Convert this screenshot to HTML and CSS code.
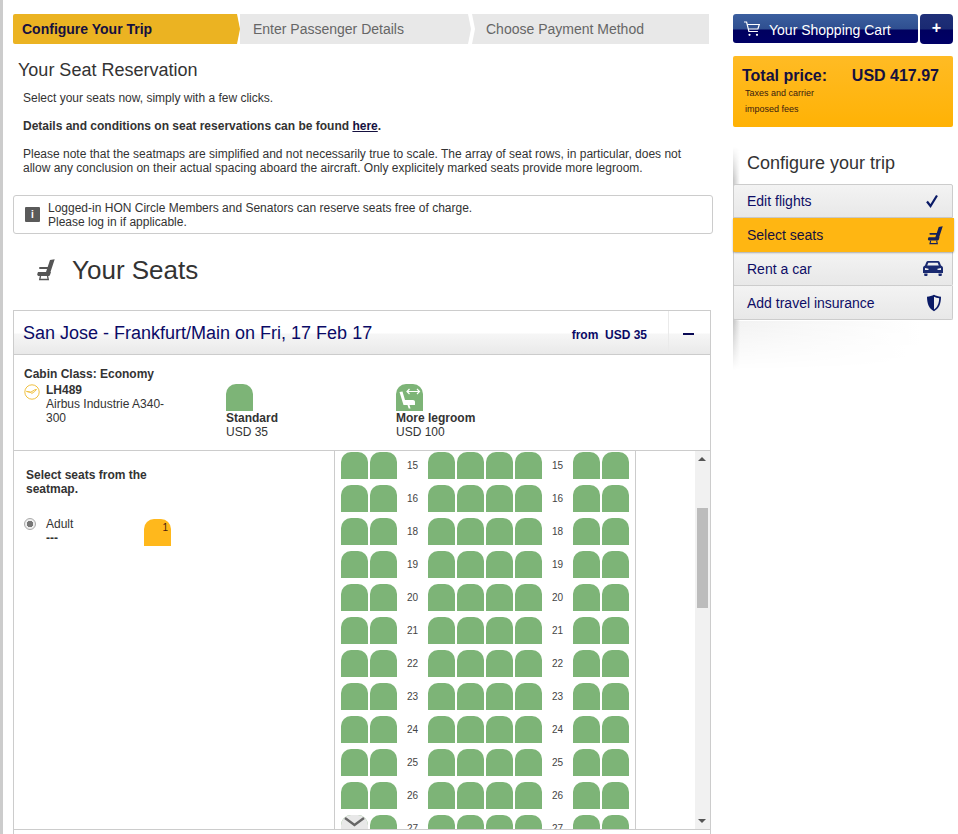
FILE: index.html
```html
<!DOCTYPE html>
<html lang="en">
<head>
<meta charset="utf-8">
<title>Your Seat Reservation</title>
<link rel="stylesheet" href="styles.css">
</head>
<body>
<div class="page">
  <main class="main">
    <ol class="steps">
      <li class="step step-active">Configure Your Trip</li>
      <li class="step step-mid">Enter Passenger Details</li>
      <li class="step step-last">Choose Payment Method</li>
    </ol>
    <h1 class="title">Your Seat Reservation</h1>
    <div class="intro">
      <p>Select your seats now, simply with a few clicks.</p>
      <p><strong>Details and conditions on seat reservations can be found <a href="#">here</a>.</strong></p>
      <p>Please note that the seatmaps are simplified and not necessarily true to scale. The array of seat rows, in particular, does not allow any conclusion on their actual spacing aboard the aircraft. Only explicitely marked seats provide more legroom.</p>
    </div>
    <div class="notice">
      <span class="notice-icon">i</span>
      <p>Logged-in HON Circle Members and Senators can reserve seats free of charge.<br>Please log in if applicable.</p>
    </div>
    <div class="seats-head">
      <svg class="seat-svg seats-icon" viewBox="0 0 20 22"><path d="M15 1l4.700-.8L15.500 13H11zM5 8h8.300l-.6 2H5c-1.300 0-1.300-2 0-2zM3 13h13l-1 3c-.2.6-.6 1-1.200 1H4c-1 0-1.800-.8-1.800-1.800z" /><path class="seat-legs" d="M5.500 17l-.8 3.500h8.600L12.500 17" /></svg>
      <h2>Your Seats</h2>
    </div>
    <section class="panel">
      <header class="panel-head">
        <h3>San Jose - Frankfurt/Main on Fri, 17 Feb 17</h3>
        <span class="panel-price">from&nbsp; USD 35</span>
        <span class="panel-toggle"><i></i></span>
      </header>
      <div class="flight">
        <div class="flight-info">
          <strong class="cabin">Cabin Class: Economy</strong>
          <div class="carrier">
            <svg class="crane" viewBox="0 0 16 16"><circle cx="8" cy="8" r="7.200" /><path d="M2.500 7.500l4 .8 4.500-2.600 1.500-.2-1.800 2-3 2-.8-1.200-4.400-1z" /></svg>
            <div><strong>LH489</strong><br>Airbus Industrie A340-300</div>
          </div>
        </div>
        <div class="legend legend-standard">
          <span class="seat"></span>
          <strong>Standard</strong>
          <span>USD 35</span>
        </div>
        <div class="legend">
          <span class="seat seat-legroom">
            <svg viewBox="0 0 27 27"><path d="M3.500 8l3-.5L9 16h8c1.200 0 2 .8 2 2v3h-5.500l1 3.500h-1.800L11.500 21H7.500z" /><path class="arrow" d="M11 7.500h12.500M13.500 5L11 7.500l2.500 2.500M21 5l2.500 2.500L21 10" /></svg>
          </span>
          <strong>More legroom</strong>
          <span>USD 100</span>
        </div>
      </div>
      <div class="map">
        <aside class="passengers">
          <p class="passengers-title">Select seats from the seatmap.</p>
          <div class="passenger">
            <span class="radio"></span>
            <div class="passenger-name">Adult<br><strong>---</strong></div>
            <span class="seat seat-own">1</span>
          </div>
        </aside>
        <div class="cabin-view">
          <div class="row"><span class="seat"></span><span class="seat"></span><span class="num">15</span><span class="seat"></span><span class="seat"></span><span class="seat"></span><span class="seat"></span><span class="num">15</span><span class="seat"></span><span class="seat"></span></div>
          <div class="row"><span class="seat"></span><span class="seat"></span><span class="num">16</span><span class="seat"></span><span class="seat"></span><span class="seat"></span><span class="seat"></span><span class="num">16</span><span class="seat"></span><span class="seat"></span></div>
          <div class="row"><span class="seat"></span><span class="seat"></span><span class="num">18</span><span class="seat"></span><span class="seat"></span><span class="seat"></span><span class="seat"></span><span class="num">18</span><span class="seat"></span><span class="seat"></span></div>
          <div class="row"><span class="seat"></span><span class="seat"></span><span class="num">19</span><span class="seat"></span><span class="seat"></span><span class="seat"></span><span class="seat"></span><span class="num">19</span><span class="seat"></span><span class="seat"></span></div>
          <div class="row"><span class="seat"></span><span class="seat"></span><span class="num">20</span><span class="seat"></span><span class="seat"></span><span class="seat"></span><span class="seat"></span><span class="num">20</span><span class="seat"></span><span class="seat"></span></div>
          <div class="row"><span class="seat"></span><span class="seat"></span><span class="num">21</span><span class="seat"></span><span class="seat"></span><span class="seat"></span><span class="seat"></span><span class="num">21</span><span class="seat"></span><span class="seat"></span></div>
          <div class="row"><span class="seat"></span><span class="seat"></span><span class="num">22</span><span class="seat"></span><span class="seat"></span><span class="seat"></span><span class="seat"></span><span class="num">22</span><span class="seat"></span><span class="seat"></span></div>
          <div class="row"><span class="seat"></span><span class="seat"></span><span class="num">23</span><span class="seat"></span><span class="seat"></span><span class="seat"></span><span class="seat"></span><span class="num">23</span><span class="seat"></span><span class="seat"></span></div>
          <div class="row"><span class="seat"></span><span class="seat"></span><span class="num">24</span><span class="seat"></span><span class="seat"></span><span class="seat"></span><span class="seat"></span><span class="num">24</span><span class="seat"></span><span class="seat"></span></div>
          <div class="row"><span class="seat"></span><span class="seat"></span><span class="num">25</span><span class="seat"></span><span class="seat"></span><span class="seat"></span><span class="seat"></span><span class="num">25</span><span class="seat"></span><span class="seat"></span></div>
          <div class="row"><span class="seat"></span><span class="seat"></span><span class="num">26</span><span class="seat"></span><span class="seat"></span><span class="seat"></span><span class="seat"></span><span class="num">26</span><span class="seat"></span><span class="seat"></span></div>
          <div class="row"><span class="seat"></span><span class="seat"></span><span class="num">27</span><span class="seat"></span><span class="seat"></span><span class="seat"></span><span class="seat"></span><span class="num">27</span><span class="seat"></span><span class="seat"></span></div>
          <span class="more"><svg viewBox="0 0 27 14"><path d="M4 3l9.500 7L23 3" /></svg></span>
        </div>
        <div class="scroll-gap"></div>
        <div class="scrollbar">
          <span class="arrow-up"></span>
          <span class="thumb"></span>
          <span class="arrow-down"></span>
        </div>
      </div>
    </section>
  </main>
  <aside class="side">
    <div class="cart">
      <a class="cart-btn" href="#">
        <svg class="cart-icon" viewBox="0 0 18 16"><path d="M1 1h2.600l2.300 9.500h9" /><path d="M4.300 3.500h12l-1.400 4.500H5.300" /><circle cx="6.500" cy="13.800" r="1.100" /><circle cx="14" cy="13.800" r="1.100" /></svg>
        <span class="cart-label">Your Shopping Cart</span>
      </a>
      <a class="cart-plus" href="#">+</a>
    </div>
    <div class="price">
      <div class="price-top"><strong>Total price:</strong><strong class="price-value">USD 417.97</strong></div>
      <p>Taxes and carrier<br>imposed fees</p>
    </div>
    <nav class="config">
      <h2>Configure your trip</h2>
      <ul class="config-list">
        <li class="config-item">Edit flights
          <svg class="ci ci-tick" viewBox="0 0 20 20"><path class="ci-check" d="M5 10.500l3.500 4.500L15 4.500" /></svg>
        </li>
        <li class="config-item config-active">Select seats
          <svg class="seat-svg ci-seat" viewBox="0 0 20 22"><path d="M15 1l4.700-.8L15.500 13H11zM5 8h8.300l-.6 2H5c-1.300 0-1.300-2 0-2zM3 13h13l-1 3c-.2.6-.6 1-1.200 1H4c-1 0-1.800-.8-1.800-1.800z" /><path class="seat-legs" d="M5.500 17l-.8 3.500h8.600L12.500 17" /></svg>
        </li>
        <li class="config-item">Rent a car
          <svg class="ci ci-car" viewBox="0 0 20 15"><path d="M5 0h10c.8 0 1.300.4 1.600 1.100L18 4.600c1.200.4 2 1.300 2 2.500V12H0V7.100c0-1.200.8-2.100 2-2.500l1.400-3.500C3.700.4 4.200 0 5 0zM5.300 1.800L4.200 4.600h11.600l-1.100-2.800zM2 7v2h3.500V7.800zM18 7l-3.500.8V9H18zM1.200 12.500h3.300v1.700c0 .5-.3.800-.8.800H2c-.5 0-.8-.3-.8-.8zM15.500 12.500h3.300v1.700c0 .5-.3.800-.8.800h-1.700c-.5 0-.8-.3-.8-.8z" fill-rule="evenodd" /></svg>
        </li>
        <li class="config-item">Add travel insurance
          <svg class="ci ci-shield" viewBox="0 0 16 18"><path d="M8 .8c2 1.200 4.300 1.800 7 1.900 0 6.500-1.800 11.700-7 14.500C2.800 14.400 1 9.200 1 2.700 3.700 2.600 6 2 8 .8zm0 1.900v12.700c3.600-2.300 5-6.200 5.200-11.200C11.300 4 9.500 3.500 8 2.700z" fill-rule="evenodd" /></svg>
        </li>
      </ul>
    </nav>
  </aside>
</div>
</body>
</html>
```
FILE: styles.css
```css
* { box-sizing: border-box; }
html, body { margin: 0; padding: 0; height: 100%; overflow: hidden; }
body {
  font-family: "Liberation Sans", Arial, sans-serif;
  font-size: 12px;
  color: #333;
  background: #fff;
}
p, h1, h2, h3, ul, ol { margin: 0; padding: 0; }
li { list-style: none; }

.page {
  display: flex;
  gap: 20px;
  height: 834px;
  padding: 14px 0 0 10px;
  border-left: 3px solid #ccc;
}
.main { width: 700px; flex: none; }
.side { width: 221px; flex: none; }

/* Steps */
.steps { display: flex; width: 696px; height: 30px; }
.step {
  display: flex;
  align-items: center;
  font-size: 14px;
  color: #666;
  background: #e8e8e8;
}
.step-active {
  position: relative;
  z-index: 2;
  width: 227px;
  padding-left: 9px;
  font-weight: bold;
  color: #15103f;
  background: #ebb322;
  border-radius: 2px 0 0 2px;
  clip-path: polygon(0 0, 224px 0, 227px 50%, 224px 100%, 0 100%);
}
.step-mid {
  width: 231px;
  padding-left: 13px;
  clip-path: polygon(0 0, 228px 0, 231px 50%, 228px 100%, 0 100%);
}
.step-last {
  flex: 1;
  margin-left: 1px;
  padding-left: 14px;
  clip-path: polygon(0 0, 100% 0, 100% 100%, 0 100%, 3px 50%);
}

/* Intro */
.title {
  margin: 16px 0 0 5px;
  font-size: 18px;
  line-height: 20px;
  font-weight: normal;
}
.intro { margin: 11px 0 0 10px; width: 670px; line-height: 14px; }
.intro p + p { margin-top: 14px; }
.intro a { color: #15103f; }
.notice {
  display: flex;
  align-items: center;
  gap: 8px;
  height: 39px;
  margin-top: 20px;
  padding-left: 11px;
  border: 1px solid #ccc;
  border-radius: 3px;
  line-height: 14px;
}
.notice-icon {
  width: 15px;
  height: 15px;
  border-radius: 1px;
  background: #5a5a5a;
  color: #fff;
  font-size: 10px;
  font-weight: bold;
  line-height: 15px;
  text-align: center;
}

.seats-head {
  display: flex;
  align-items: center;
  gap: 17px;
  height: 76px;
  padding: 0 0 4px 22px;
}
.seats-head h2 { font-size: 26px; font-weight: normal; }
.seat-svg { fill: currentColor; color: #555; }
.seat-legs { fill: none; stroke: currentColor; stroke-width: 1.300; }
.seats-icon { width: 20px; height: 22px; }

/* Panel */
.panel { width: 698px; border: 1px solid #ccc; height: 530px; }
.panel-head {
  display: flex;
  align-items: center;
  height: 44px;
  padding-left: 9px;
  color: #0a0a66;
  background: linear-gradient(#fff 0, #fff 22px, #f6f6f6 23px, #e9e9e9 100%);
  border-bottom: 1px solid #ccc;
}
.panel-head h3 { flex: 1; margin-top: 2px; font-size: 18px; font-weight: normal; }
.panel-price { margin: 4px 21px 0 0; font-weight: bold; }
.panel-toggle {
  display: flex;
  align-items: center;
  justify-content: center;
  width: 42px;
  height: 100%;
  border-left: 1px solid #eaeaea;
}
.panel-toggle i { width: 11px; height: 2px; margin: 2px 3px 0 0; background: #0a0a55; }

.flight { display: flex; height: 96px; padding: 12px 0 0 10px; border-bottom: 1px solid #ccc; line-height: 14px; }
.flight-info { width: 202px; }
.cabin { display: block; margin-bottom: 2px; }
.carrier { display: flex; gap: 6px; width: 155px; }
.crane { width: 16px; height: 16px; margin-top: 1px; flex: none; fill: none; stroke: #f0c040; stroke-width: 1; }
.legend { display: flex; flex-direction: column; width: 170px; padding-top: 17px; }

.seat {
  display: block;
  width: 27px;
  height: 27px;
  background: #7db477;
  border-radius: 10px 10px 0 0;
}
.seat-legroom svg { display: block; width: 27px; height: 27px; fill: #fff; }
.seat-legroom .arrow { fill: none; stroke: #fff; stroke-width: 1.200; }
.seat-own {
  flex: none;
  margin-top: 2px;
  background: #ffb81c;
  font-size: 10px;
  line-height: 12px;
  color: #4a1a10;
  text-align: right;
  padding: 3px 3px 0 0;
}

/* Seatmap */
.map { display: flex; height: 379px; border-bottom: 1px solid #ccc; }
.passengers { width: 320px; padding: 17px 0 0 12px; flex: none; }
.passengers-title { width: 150px; font-weight: bold; line-height: 14px; }
.passenger { display: flex; align-items: flex-start; margin-top: 21px; line-height: 14px; }
.radio {
  width: 12px; height: 12px; margin: 1px 10px 0 -2px;
  border: 1px solid #aaa; border-radius: 50%;
  background: radial-gradient(circle, #777 0 3px, #eee 3.5px);
}
.passenger-name { width: 98px; }

.cabin-view {
  position: relative;
  width: 302px;
  flex: none;
  overflow: hidden;
  border-left: 1px solid #ccc;
  border-right: 1px solid #ccc;
  padding: 1px 0 0 6px;
}
.row { display: flex; gap: 2px; height: 33px; }
.num {
  width: 27px;
  height: 27px;
  font-size: 10px;
  line-height: 27px;
  text-align: center;
  color: #444;
}
.more {
  position: absolute;
  left: 6px;
  top: 364px;
  width: 27px;
  height: 14px;
  background: #e8e8e8;
  border-radius: 10px 10px 0 0;
}
.more svg { display: block; width: 27px; height: 14px; fill: none; stroke: #666; stroke-width: 2.400; }
.scroll-gap { flex: 1; }
.scrollbar {
  position: relative;
  width: 15px;
  flex: none;
  background: #f1f1f1;
}
.thumb { position: absolute; left: 2px; top: 57px; width: 11px; height: 100px; background: #bcbcbc; }
.arrow-up, .arrow-down {
  position: absolute;
  left: 3px;
  width: 0;
  height: 0;
  border-left: 4px solid transparent;
  border-right: 4px solid transparent;
}
.arrow-up { top: 6px; border-bottom: 4px solid #555; }
.arrow-down { bottom: 6px; border-top: 4px solid #555; }

/* Side */
.cart { display: flex; gap: 2px; height: 30px; width: 220px; }
.cart-btn {
  display: flex;
  align-items: center;
  gap: 8px;
  width: 185px;
  height: 29px;
  padding-left: 10px;
  color: #fff;
  font-size: 14px;
  text-decoration: none;
  border-radius: 3px;
  background: linear-gradient(#3b5f9f 0, #2f4f90 15px, #00005f 16px, #000066 100%);
}
.cart-label { margin-top: 2px; }
.cart-icon { width: 18px; height: 16px; fill: none; stroke: #fff; stroke-width: 1.200; }
.cart-icon circle { fill: #fff; stroke: none; }
.cart-plus {
  width: 33px;
  height: 30px;
  color: #fff;
  font-size: 16px;
  font-weight: bold;
  line-height: 27px;
  text-align: center;
  text-decoration: none;
  border-radius: 4px;
  background: linear-gradient(#1f2f78 0, #1a2a72 15px, #00005f 16px, #000066 100%);
}
.price {
  width: 220px;
  height: 71px;
  margin-top: 12px;
  padding: 11px 14px 0 9px;
  border-radius: 2px;
  background: linear-gradient(#ffbb24, #ffb205);
  color: #15103f;
}
.price-top { display: flex; justify-content: space-between; font-size: 16px; line-height: 18px; }
.price p { margin: 0 0 0 3px; font-size: 9px; line-height: 16px; color: #3a2010; }
.config {
  position: relative;
  z-index: 0;
  margin-top: 20px;
  height: 223px;
  width: 221px;
}
.config::before {
  content: "";
  position: absolute;
  inset: 0;
  z-index: -1;
  background:
    linear-gradient(to right, #c4c4c4, rgba(255, 255, 255, 0) 7px) no-repeat left top / 100% 100%,
    linear-gradient(to right, #f2f2f2, #fff 85%) no-repeat left bottom / 100% 49px;
  -webkit-mask-image: linear-gradient(transparent 0, #fff 15%, #fff 78%, transparent 100%);
  mask-image: linear-gradient(transparent 0, #fff 15%, #fff 78%, transparent 100%);
}
.config h2 {
  height: 37px;
  padding: 6px 0 0 14px;
  font-size: 18px;
  line-height: 20px;
  font-weight: normal;
}
.config-list { position: relative; width: 220px; }
.config-item {
  display: flex;
  align-items: center;
  justify-content: space-between;
  height: 34px;
  padding: 0 10px 0 13px;
  font-size: 14px;
  color: #0d0d66;
  background: linear-gradient(#f3f3f3, #e8e8e8);
  border: 1px solid #ccc;
  border-top: 0;
  border-radius: 0 0 2px 2px;
}
.config-item:first-child { border-top: 1px solid #ccc; border-radius: 2px 2px 0 0; }
.config-active {
  position: relative;
  width: 221px;
  padding-left: 14px;
  color: #15103f;
  background: #ffb612;
  border: 0;
  box-shadow: 0 1px 2px rgba(0, 0, 0, .3);
}
.ci { width: 14px; height: 14px; fill: #0a1a66; }
.ci-tick { width: 20px; height: 20px; }
.ci-check { fill: none; stroke: #0a1a66; stroke-width: 2.200; }
.ci-seat { width: 17px; height: 19px; margin-right: 1px; color: #15205a; }
.ci-car { width: 20px; height: 15px; margin-right: -1px; fill: #1a2a70; }
.ci-shield { width: 16px; height: 18px; }
```
